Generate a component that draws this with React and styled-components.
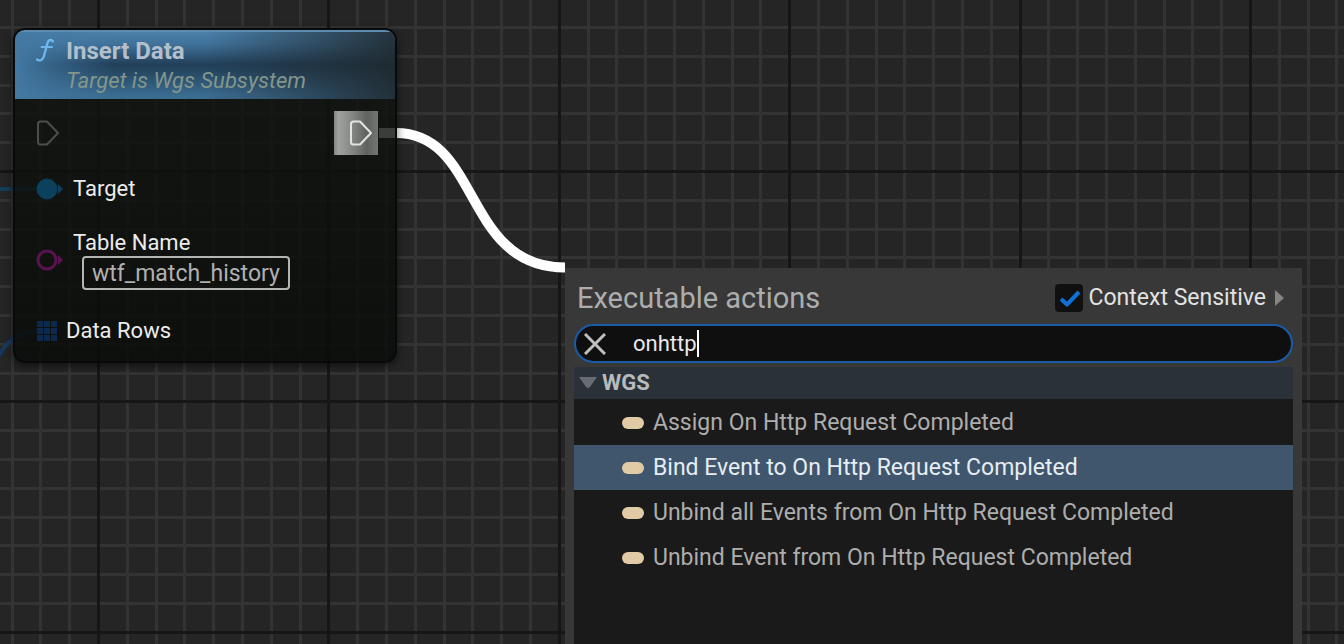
import React, { useState } from "react";
import styled, { createGlobalStyle } from "styled-components";

const GlobalStyle = createGlobalStyle`
  *, *::before, *::after { box-sizing: border-box; }
  body { margin: 0; background: #252525; font-family: Roboto, "Liberation Sans", sans-serif; }
  h2, p, ul { margin: 0; padding: 0; }
  button, input { font-family: inherit; }
`;

const Canvas = styled.main`
  position: relative;
  min-height: 100vh;
  overflow: hidden;
  background: #252525;
`;

const Backdrop = styled.svg`
  position: absolute;
  inset: 0;
  width: 100%;
  height: 100%;
`;

const Node = styled.article`
  position: absolute;
  left: 13px;
  top: 28px;
  width: 384px;
  border: 2px solid #07090a;
  border-radius: 12px;
  overflow: hidden;
  background: linear-gradient(rgba(15, 19, 15, 0.8), rgba(9, 11, 9, 0.84));
  box-shadow: 0 3px 8px rgba(0, 0, 0, 0.55);
`;

const NodeHeader = styled.header`
  display: flex;
  align-items: flex-start;
  gap: 12px;
  height: 69px;
  padding: 5px 21px 0;
  border-top: 2px solid #5b8db3;
  background:
    linear-gradient(to right, rgba(67, 121, 163, 1), rgba(67, 121, 163, 0.6) 9%, rgba(67, 121, 163, 0) 26%),
    linear-gradient(to right, rgba(30, 38, 42, 0) 50%, rgba(30, 38, 42, 0.85) 100%),
    linear-gradient(#4a80aa, #40729a 18%, #22405a 48%, #24455f 56%, #3a6b90 94%, #3a6b90);
`;

const FunctionIcon = styled.svg`
  flex: none;
  width: 18px;
  height: 24px;
  margin-top: 1px;
`;

const NodeTitle = styled.h2`
  font-size: 24px;
  line-height: 28px;
  font-weight: 700;
  color: #b3bfca;
`;

const NodeSubtitle = styled.p`
  margin-top: 2px;
  font-size: 22px;
  line-height: 28px;
  font-style: italic;
  color: #84968a;
`;

const Pins = styled.div`
  display: flex;
  flex-direction: column;
  gap: 28px;
  padding: 12px 17px 17px 21px;
`;

const ExecRow = styled.div`
  display: flex;
  align-items: center;
  justify-content: space-between;
  height: 44px;
  margin-bottom: -7px;
`;

const PinRow = styled.div`
  display: flex;
  align-items: center;
  gap: ${(p) => p.$gap}px;
`;

const PinLabel = styled.label`
  display: block;
  font-size: 22px;
  line-height: 26px;
  color: #ececec;
`;

const PinIcon = styled.svg`
  flex: none;
  display: block;
`;

const ExecButton = styled.button`
  display: flex;
  align-items: center;
  justify-content: flex-end;
  width: 44px;
  height: 44px;
  padding: 0 5px 0 0;
  border: 0;
  background: linear-gradient(to right, #848684, #a0a2a0 10%, #868886 40%, #5f625f 75%, #747674);
`;

const PinField = styled.div`
  display: flex;
  flex-direction: column;
`;

const PinInput = styled.input`
  field-sizing: content;
  align-self: flex-start;
  height: 34px;
  margin-left: 9px;
  padding: 0 8px;
  border: 2px solid #b4b4b4;
  border-radius: 4px;
  background: transparent;
  color: #b0b0b0;
  font-size: 23px;
  line-height: 26px;
  outline: none;
`;

const Menu = styled.section`
  position: absolute;
  left: 565px;
  top: 268px;
  bottom: 0;
  width: 737px;
  display: flex;
  flex-direction: column;
  padding: 0 9px;
  background: #383838;
`;

const MenuHeader = styled.header`
  display: flex;
  align-items: center;
  justify-content: space-between;
  height: 56px;
  padding: 4px 9px 0 3px;
`;

const MenuTitle = styled.h2`
  font-size: 29px;
  line-height: 34px;
  font-weight: 400;
  color: #adadad;
`;

const ContextToggle = styled.div`
  display: flex;
  align-items: center;
  gap: 6px;
`;

const CheckFrame = styled.span`
  position: relative;
  display: block;
  width: 28px;
  height: 28px;
`;

const CheckInput = styled.input`
  appearance: none;
  display: block;
  width: 28px;
  height: 28px;
  margin: 0;
  border-radius: 4px;
  background: #101010;
  outline: none;
`;

const CheckMark = styled.svg`
  position: absolute;
  inset: 0;
  pointer-events: none;
`;

const ToggleLabel = styled.label`
  font-size: 23px;
  line-height: 28px;
  color: #e2e2e2;
`;

const ExpandButton = styled.button`
  display: flex;
  padding: 0;
  margin-left: 2px;
  border: 0;
  background: transparent;
`;

const SearchBar = styled.div`
  display: flex;
  flex: none;
  align-items: center;
  height: 39px;
  padding-left: 8px;
  border: 2px solid #1a5ba8;
  border-radius: 20px;
  background: #0f0f0f;
`;

const ClearButton = styled.button`
  display: flex;
  padding: 0;
  margin-right: 27px;
  border: 0;
  background: transparent;
`;

const SearchInput = styled.input`
  field-sizing: content;
  padding: 0;
  border: 0;
  outline: none;
  background: transparent;
  color: #e8e8e8;
  font-size: 22px;
  line-height: 26px;
  caret-color: transparent;
`;

const Caret = styled.span`
  width: 2px;
  height: 27px;
  background: #ffffff;
`;

const CategoryButton = styled.button`
  display: flex;
  flex: none;
  align-items: center;
  gap: 5px;
  height: 32px;
  margin-top: 4px;
  padding: 0 5px;
  border: 0;
  background: #2b3138;
  color: #b8bbbe;
  font-size: 22px;
  line-height: 26px;
  font-weight: 700;
`;

const ActionList = styled.ul`
  flex: 1;
  padding-top: 1px;
  background: #1a1a1a;
  list-style: none;
`;

const ActionButton = styled.button`
  display: flex;
  align-items: center;
  gap: 9px;
  width: 100%;
  height: 45px;
  padding: 0 0 0 48px;
  border: 0;
  background: ${(p) => (p.$selected ? "#40566d" : "transparent")};
  color: ${(p) => (p.$selected ? "#e6edf3" : "#adadad")};
  font-size: 23px;
  line-height: 28px;
  text-align: left;
`;

const DelegateMark = styled.span`
  flex: none;
  width: 22px;
  height: 12px;
  border-radius: 6px;
  background: #e0cba6;
`;

const ACTIONS = [
  "Assign On Http Request Completed",
  "Bind Event to On Http Request Completed",
  "Unbind all Events from On Http Request Completed",
  "Unbind Event from On Http Request Completed",
];

// Forty minor cells span 1152px, with a dark major line every eighth cell.
const TILE = 1152;
const steps = Array.from({ length: 40 }, (_, i) => ({
  at: Math.round((i * TILE) / 40),
  major: i % 8 === 0,
}));
const minor = steps.filter((s) => !s.major);
const major = steps.filter((s) => s.major);

function GraphBackdrop() {
  return (
    <Backdrop aria-hidden="true">
      <defs>
        <pattern id="grid" x="97" y="170" width={TILE} height={TILE} patternUnits="userSpaceOnUse">
          {minor.map((s) => (
            <g key={s.at} fill="#333333">
              <rect x={s.at} y="0" width="3" height={TILE} />
              <rect x="0" y={s.at} width={TILE} height="3" />
            </g>
          ))}
          {major.map((s) => (
            <g key={s.at} fill="#161616">
              <rect x={s.at} y="0" width="3" height={TILE} />
              <rect x="0" y={s.at} width={TILE} height="3" />
            </g>
          ))}
        </pattern>
      </defs>
      <rect width="100%" height="100%" fill="url(#grid)" />
      <g fill="none" strokeLinecap="butt">
        <path d="M0 189H40" stroke="#173c55" strokeWidth="4" />
        <path d="M-2 357C6 342 18 331 40 331" stroke="#17395c" strokeWidth="4" />
        <path d="M379 133H396C481 133 463 267.500 565 267.500" stroke="#ffffff" strokeWidth="10" />
      </g>
    </Backdrop>
  );
}

function ExecArrow({ color }) {
  return (
    <PinIcon width="24" height="26" viewBox="0 0 24 26" fill="none" stroke={color} strokeWidth="2" strokeLinejoin="round">
      <path d="M4.500 1.500H11L22 13L11 24.500H4.500Q2 24.500 2 22V4Q2 1.500 4.500 1.500Z" />
    </PinIcon>
  );
}

function DataPin({ color, hollow }) {
  return (
    <PinIcon width="28" height="22" viewBox="0 0 28 22">
      <circle cx="11" cy="11" r={hollow ? 9 : 10} fill={hollow ? "none" : color} stroke={color} strokeWidth={hollow ? 3 : 1} />
      <path d="M22 6L27 11L22 16Z" fill={color} />
    </PinIcon>
  );
}

function ArrayPin() {
  return (
    <PinIcon width="22" height="22" viewBox="0 0 22 22" fill="#0c2a4e">
      {[1, 8, 15].map((y) => [1, 8, 15].map((x) => <rect key={`${x}-${y}`} x={x} y={y} width="6" height="6" />))}
    </PinIcon>
  );
}

function InsertDataNode() {
  const [table, setTable] = useState("wtf_match_history");
  return (
    <Node>
      <NodeHeader>
        <FunctionIcon viewBox="0 0 18 24" fill="none" stroke="#6bb8ee" strokeWidth="2" strokeLinecap="round">
          <path d="M17 3.500C15.500 1 12.500 1.500 11.500 5L8 18C7 22 4 23.500 1 21.500" strokeWidth="2.400" />
          <path d="M5.500 9H16" />
        </FunctionIcon>
        <div>
          <NodeTitle>Insert Data</NodeTitle>
          <NodeSubtitle>Target is Wgs Subsystem</NodeSubtitle>
        </div>
      </NodeHeader>
      <Pins>
        <ExecRow>
          <ExecArrow color="#4c4e4c" />
          <ExecButton aria-label="Execution output">
            <ExecArrow color="#e2e4e2" />
          </ExecButton>
        </ExecRow>
        <PinRow $gap={9}>
          <DataPin color="#0c415e" />
          <PinLabel as="span">Target</PinLabel>
        </PinRow>
        <PinRow $gap={9}>
          <DataPin color="#5a1350" hollow />
          <PinField>
            <PinLabel htmlFor="table-name">Table Name</PinLabel>
            <PinInput id="table-name" type="text" value={table} onChange={(e) => setTable(e.target.value)} />
          </PinField>
        </PinRow>
        <PinRow $gap={8}>
          <ArrayPin />
          <PinLabel as="span">Data Rows</PinLabel>
        </PinRow>
      </Pins>
    </Node>
  );
}

function ActionMenu() {
  const [query, setQuery] = useState("onhttp");
  const [sensitive, setSensitive] = useState(true);
  const [selected, setSelected] = useState(1);
  return (
    <Menu>
      <MenuHeader>
        <MenuTitle>Executable actions</MenuTitle>
        <ContextToggle>
          <CheckFrame>
            <CheckInput id="context" type="checkbox" checked={sensitive} onChange={(e) => setSensitive(e.target.checked)} />
            {sensitive && (
              <CheckMark viewBox="0 0 28 28" fill="none" stroke="#0f70d8" strokeWidth="4">
                <path d="M6 15L12 20.500L24 8" strokeLinejoin="round" />
              </CheckMark>
            )}
          </CheckFrame>
          <ToggleLabel htmlFor="context">Context Sensitive</ToggleLabel>
          <ExpandButton aria-label="Context options">
            <svg width="10" height="16" viewBox="0 0 10 16"><path d="M1 0L10 8L1 16Z" fill="#858585" /></svg>
          </ExpandButton>
        </ContextToggle>
      </MenuHeader>
      <SearchBar>
        <ClearButton aria-label="Clear search" onClick={() => setQuery("")}>
          <svg width="22" height="22" viewBox="0 0 22 22" stroke="#c0c0c0" strokeWidth="3">
            <path d="M1 1L21 21M21 1L1 21" />
          </svg>
        </ClearButton>
        <SearchInput aria-label="Search actions" type="text" value={query} onChange={(e) => setQuery(e.target.value)} />
        <Caret />
      </SearchBar>
      <CategoryButton>
        <svg width="18" height="12" viewBox="0 0 18 12"><path d="M0 0H18L11 10Q9 12 7 10Z" fill="#676c72" /></svg>
        WGS
      </CategoryButton>
      <ActionList>
        {ACTIONS.map((name, i) => (
          <li key={name}>
            <ActionButton $selected={i === selected} onClick={() => setSelected(i)}>
              <DelegateMark />
              {name}
            </ActionButton>
          </li>
        ))}
      </ActionList>
    </Menu>
  );
}

export default function App() {
  return (
    <>
      <GlobalStyle />
      <Canvas>
        <GraphBackdrop />
        <InsertDataNode />
        <ActionMenu />
      </Canvas>
    </>
  );
}
